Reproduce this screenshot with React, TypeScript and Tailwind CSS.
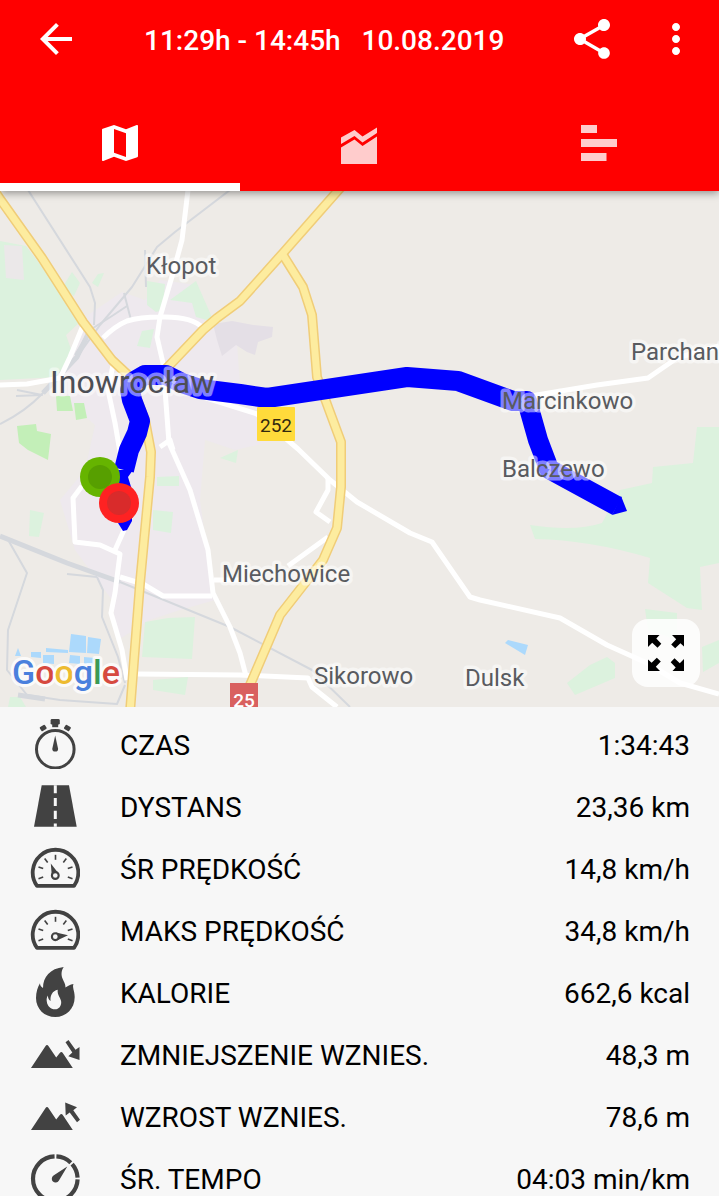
import type { ReactNode } from 'react';
import { MdArrowBack, MdMap, MdMoreVert, MdShare } from 'react-icons/md';

const ICON_COLOR = '#424242';
const TICK_ANGLES = [-109, -71, -37, 0, 37, 71, 109];

const StatIcon = ({ children }: { children: ReactNode }) => (
  <svg viewBox="0 0 50 50" className="size-[50px] shrink-0" fill={ICON_COLOR} aria-hidden="true">
    {children}
  </svg>
);

const StopwatchIcon = () => (
  <StatIcon>
    <circle cx="25.3" cy="30.2" r="18.8" fill="none" stroke={ICON_COLOR} strokeWidth="3" />
    <rect x="20.6" y="0" width="9.2" height="5.6" rx="1.4" />
    <path d="M22.2 5h6v3.2h-6z" />
    <rect x="-3" y="-2.4" width="6" height="4.8" rx="1" transform="translate(13.2 9) rotate(-32)" />
    <rect x="-3" y="-2.4" width="6" height="4.8" rx="1" transform="translate(37.4 9) rotate(32)" />
    <path d="M25.2 16.5l2.9 13.2a2.9 2.9 0 1 1-5.8 0z" />
  </StatIcon>
);

const RoadIcon = () => (
  <StatIcon>
    <path d="M11.7 4.3H39L46.7 45.7H4z" />
    <path
      fill="#f7f7f7"
      d="M23.8 4.3h3v8h-3zM23.8 17h3v8h-3zM23.8 29.7h3v8.3h-3zM23.8 42.4h3v3.3h-3z"
    />
  </StatIcon>
);

const GaugeIcon = ({ needle, hubY }: { needle: string; hubY: number }) => (
  <StatIcon>
    <path
      d="M7 42.9A22.8 22.8 0 1 1 44 42.9Z"
      fill="none"
      stroke={ICON_COLOR}
      strokeWidth="3.8"
      strokeLinejoin="round"
    />
    {TICK_ANGLES.map((angle) => (
      <path
        key={angle}
        d="M25.5 11.8v5"
        stroke={ICON_COLOR}
        strokeWidth="1.6"
        transform={`rotate(${angle} 25.5 29.8)`}
      />
    ))}
    <path d={needle} />
    <circle cx="25.3" cy={hubY} r="3.4" fill="#f7f7f7" stroke={ICON_COLOR} strokeWidth="2.1" />
  </StatIcon>
);

const FlameIcon = () => (
  <StatIcon>
    <path
      fillRule="evenodd"
      d="M33.7 0C31 4 31.200 8 32.500 11.500C34 15 35.500 17 35.500 20.500C37.500 19.500 40 17 43.500 17C42 20 44.700 24 44.700 30C44.700 42 36 50 25.300 50C14.500 50 6 42 6 31C6 25 7.800 20 10 16.300C10 18.500 11 20 13 21C13 10 20 1.500 33.700 0ZM27.700 22.800C22.500 24 20 28.500 20.600 34C18.700 33 18 31 17.800 28.500C16.500 31 16.500 32.500 16.800 34.500C17.300 39 20.500 42.300 25 42.300C29 42.300 31.300 39 31.200 35C31 31 27 28.500 27.700 22.800Z"
    />
  </StatIcon>
);

const MountainIcon = ({ children }: { children: ReactNode }) => (
  <StatIcon>
    <path d="M1 39L15.400 17.200Q17 15 18.600 17.200L26.200 28.500L29.800 24Q31.300 22.200 32.800 24L42.800 39Z" />
    {children}
  </StatIcon>
);

const PaceIcon = () => (
  <StatIcon>
    <circle
      cx="25.3"
      cy="25.7"
      r="22.3"
      fill="none"
      stroke={ICON_COLOR}
      strokeWidth="4.2"
      pathLength="360"
      strokeDasharray="266 5 41 5 38 5"
      strokeDashoffset="-2"
    />
    <path d="M37.300 13.500L28.800 27.800A3.800 3.800 0 1 1 23.500 22.600Z" />
  </StatIcon>
);

const stats = [
  { label: 'CZAS', value: '1:34:43', icon: <StopwatchIcon /> },
  { label: 'DYSTANS', value: '23,36 km', icon: <RoadIcon /> },
  {
    label: 'ŚR PRĘDKOŚĆ',
    value: '14,8 km/h',
    icon: <GaugeIcon hubY={32.5} needle="M20.800 20.500L29 31L21.800 32.500Z" />,
  },
  {
    label: 'MAKS PRĘDKOŚĆ',
    value: '34,8 km/h',
    icon: <GaugeIcon hubY={31.7} needle="M38 30.300L26 27.500L27 35.500Z" />,
  },
  { label: 'KALORIE', value: '662,6 kcal', icon: <FlameIcon /> },
  {
    label: 'ZMNIEJSZENIE WZNIES.',
    value: '48,3 m',
    icon: (
      <MountainIcon>
        <path d="M35.500 13.300L38.500 11L45.500 20.800L49.500 18V31L38.300 27.300L42.300 23.500Z" />
      </MountainIcon>
    ),
  },
  {
    label: 'WZROST WZNIES.',
    value: '78,6 m',
    icon: (
      <MountainIcon>
        <path d="M35.200 11.500L47 16.300L43.300 19.300L50 28.700L47 31.300L39.700 21.500L35.700 24.500Z" />
      </MountainIcon>
    ),
  },
  { label: 'ŚR. TEMPO', value: '04:03 min/km', icon: <PaceIcon /> },
];

const yellowRoads = [
  'M-4 193L0 199L42 258L83 322L112 360L127 374L145 420L151 452L150 477L140 583L130 712',
  'M342 186L283 253L240 301L217 318L203 330L165 370',
  'M283 255L303 287L312 315L317 377L328 407L341 442L341 487L337 528L323 560L280 615L253 678L240 708',
];

const whiteRoads = [
  'M188 190L182 240L173 273L160 317L157 337L163 363L166 403L169 443L190 490L208 550L213 593L230 627L240 653L246 676',
  'M103 338Q115 326 127 321Q140 317 160 317Q192 316 203 328',
  'M0 385L27 384L60 378L70 357L84 323',
  'M113 365L108 390L115 423L120 452',
  'M82 486L73 498L75 542L100 545L120 554L115 593L111 613L122 650L127 680',
  'M124 530L115 550',
  'M120 577L143 584L163 596L212 596',
  'M214 580L240 580M288 566L328 537',
  'M137 674L240 675L308 678L312 687L337 707',
  'M200 396L257 414L298 449L330 480L357 502L410 533L432 542L470 597L480 600L560 618L607 645L647 663L680 683L719 694',
  'M328 478L328 490L316 512L330 522',
  'M525 397L597 385L648 378L677 358L719 346',
  'M160 447L170 440L173 450',
];

const rails = [
  'M28 190L90 287L95 303L94 325',
  'M230 190L175 232L157 247L132 287L100 325L77 357L43 393Q25 412 0 424',
  'M75 355L90 330L112 316L127 306M124 293L131 320M145 250L146 287',
  'M7 538L27 573L8 630L7 670L27 695L60 700L117 704L125 685',
  'M97 577L103 590L102 617L118 657L125 683',
  'M67 574L97 577M17 390L42 395L16 396',
  'M120 582L230 627L312 670L350 707',
];

const places = [
  { name: 'Kłopot', x: 146, y: 274 },
  { name: 'Parchanie', x: 631, y: 360 },
  { name: 'Marcinkowo', x: 502, y: 409 },
  { name: 'Balczewo', x: 502, y: 477 },
  { name: 'Miechowice', x: 222, y: 582 },
  { name: 'Sikorowo', x: 314, y: 684 },
  { name: 'Dulsk', x: 465, y: 686 },
];

const RouteMap = () => (
  <svg
    viewBox="0 191 719 516"
    preserveAspectRatio="xMidYMid slice"
    className="block size-full"
    fontFamily="Roboto, sans-serif"
    role="img"
    aria-label="Mapa trasy"
  >
    <rect x="0" y="191" width="719" height="516" fill="#eeebe7" />

    {/* built-up areas */}
    <path
      fill="#eee9ee"
      d="M88 315L122 292L145 300L160 280L196 285L205 325L236 330L240 385L262 410L280 440L235 450L205 440L200 500L208 560L215 600L180 610L150 620L118 640L112 600L75 550L60 500L85 470L95 425L60 395L66 360Z"
    />
    <path
      fill="#e4dfe6"
      d="M213 324L232 321L253 325L273 327L272 337L258 342L255 355L247 352L236 345L222 356L217 340Z"
    />

    {/* forests and parks */}
    <g fill="#dcf2de">
      <path d="M0 241L26 246L52 280L80 322L66 335L72 352L60 377L0 380Z" />
      <path d="M62 288L72 272L80 283L74 296ZM92 283L98 274L104 273L98 287ZM147 281L165 284L163 310L156 312L147 305Z" />
      <path d="M170 300L196 281L214 322L196 317L192 303ZM137 346L142 331L154 329L150 348Z" />
      <path d="M697 427H719V563L700 567L702 610L687 608L648 583L650 558Q590 540 535 539L530 525Q575 532 602 523L620 490L652 483L653 467L693 463Z" />
      <path d="M645 609L677 613V640L648 630ZM567 683L590 665L607 657L615 663V678L575 695ZM702 647L719 640V663L703 672Z" />
      <path d="M145 622L168 618L195 617L192 659L142 657ZM153 510L173 512L171 533L153 530ZM157 477L179 476V486L157 486Z" />
      <path d="M30 510L44 513L39 537L29 536ZM153 680L188 677L185 695L153 690ZM10 697L20 697L26 707H8ZM220 458L238 450L236 463Z" />
    </g>
    <path fill="#ebe8e9" d="M4 245L22 246L24 280L6 278Z" />
    <g fill="#c3efb8">
      <path d="M56 396L70 396L73 411L57 411ZM74 403L84 403L87 418L76 420Z" />
      <path d="M17 426L36 424L37 431L51 434L48 460L28 450L19 443Z" />
    </g>

    {/* water */}
    <g fill="#acd9fc">
      <path d="M71 634L86 636V653L69 652ZM88 637L101 639L99 654L87 653Z" />
      <path d="M46 648L68 650V653L46 652ZM31 652L41 652V658L31 657ZM43 655L54 655V664L43 663ZM70 655L80 656V664L69 663ZM84 657L95 658L94 665L84 664ZM18 648L21 656L15 656Z" />
      <path d="M508 640L528 645L525 655L505 643Z" />
    </g>

    <g fill="none" strokeLinejoin="round">
      <g stroke="#d5d8dd" strokeWidth="2">
        {rails.map((d) => (
          <path key={d} d={d} />
        ))}
        <path d="M0 536L67 563L120 582" strokeWidth="5" />
        <path d="M90 330L77 357L43 393" strokeWidth="5" />
        <path d="M18 695L45 699" strokeWidth="5" />
      </g>
      <g stroke="#ffffff" strokeWidth="5">
        {whiteRoads.map((d) => (
          <path key={d} d={d} />
        ))}
      </g>
      <g stroke="#f0cd78" strokeWidth="10">
        {yellowRoads.map((d) => (
          <path key={d} d={d} />
        ))}
      </g>
      <g stroke="#fdec9f" strokeWidth="7">
        {yellowRoads.map((d) => (
          <path key={d} d={d} />
        ))}
      </g>

      {/* recorded track */}
      <path
        stroke="#0000ff"
        strokeWidth="20"
        d="M124 470L129 450L137 433L140 421L132 400L130 390L133 382L145 375L166 375L182 383L200 389L240 394L267 398L407 377L458 381L513 401L527 401L538 440L549 469L617 506"
      />
    </g>
    <path fill="#0000ff" d="M111 470L133 470L128 477L132 490V521L127 530L123 531L118 523Z" />
    <path fill="#0000ff" d="M621 496L627 511L612 515Z" />

    <rect x="257" y="407" width="38" height="34" rx="1" fill="#ffdb3b" />
    <text x="276" y="432" fontSize="19" textAnchor="middle" fill="#33290f">
      252
    </text>
    <rect x="230" y="683" width="28" height="28" fill="#d9605f" />
    <text x="244" y="707" fontSize="19" fontWeight="500" textAnchor="middle" fill="#ffffff">
      25
    </text>

    <g stroke="#ffffff" strokeOpacity="0.5" strokeWidth="7" strokeLinejoin="round" paintOrder="stroke">
      <g fontSize="24" fill="#595b60">
        {places.map(({ name, x, y }) => (
          <text key={name} x={x} y={y}>
            {name}
          </text>
        ))}
      </g>
      <text x="50" y="393" fontSize="32" fill="#4c4e54">
        Inowrocław
      </text>
    </g>

    <circle cx="100" cy="477" r="20" fill="#66b400" />
    <circle cx="100" cy="477" r="12" fill="#579f00" />
    <circle cx="119" cy="503" r="20" fill="#fe2222" />
    <circle cx="119" cy="503" r="12" fill="#d92b2b" />

    <text
      x="12"
      y="684"
      fontSize="34"
      fontWeight="500"
      stroke="#ffffff"
      strokeOpacity="0.8"
      strokeWidth="6"
      strokeLinejoin="round"
      paintOrder="stroke"
    >
      <tspan fill="#4a80dd">G</tspan>
      <tspan fill="#d6493f">o</tspan>
      <tspan fill="#edbb30">o</tspan>
      <tspan fill="#4a80dd">g</tspan>
      <tspan fill="#3c9a55">l</tspan>
      <tspan fill="#d6493f">e</tspan>
    </text>
  </svg>
);

const ChartIcon = () => (
  <svg viewBox="0 0 48 48" className="size-12" fill="currentColor" aria-hidden="true">
    <path d="M6 45V28.500L19.500 20.500L27.500 27L42 17.500V45Z" />
    <path d="M6 18.500L19.500 11L27.500 17.500L42 8.500V14L27.500 23.500L19.500 17L6 25Z" />
  </svg>
);

const BarsIcon = () => (
  <svg viewBox="0 0 48 48" className="size-12" fill="currentColor" aria-hidden="true">
    <path d="M6 6h16v8H6zM6 20h36v8H6zM6 34h25.500v8H6z" />
  </svg>
);

const tabs = [
  { name: 'Mapa', icon: <MdMap className="size-12" />, active: true },
  { name: 'Wykres', icon: <ChartIcon />, active: false },
  { name: 'Okrążenia', icon: <BarsIcon />, active: false },
];

const App = () => {
  return (
    <div className="flex h-screen flex-col overflow-hidden bg-[#f7f7f7] font-[Roboto,sans-serif]">
      <header className="relative z-10 shrink-0 bg-[#ff0000] text-white shadow-[0_2px_8px_rgba(0,0,0,0.4)]">
        <div className="flex h-[78px] items-center pr-[19px] pl-8">
          <button type="button" aria-label="Wstecz">
            <MdArrowBack className="size-12" />
          </button>
          <h1 className="ml-16 flex-1 pt-1 text-[28px] leading-9 font-medium whitespace-pre">
            11:29h - 14:45h   10.08.2019
          </h1>
          <button type="button" aria-label="Udostępnij" className="mr-9">
            <MdShare className="size-12" />
          </button>
          <button type="button" aria-label="Więcej">
            <MdMoreVert className="size-12" />
          </button>
        </div>
        <nav className="mt-[17px] grid h-24 grid-cols-3" role="tablist">
          {tabs.map(({ name, icon, active }) => (
            <button
              key={name}
              type="button"
              role="tab"
              aria-label={name}
              aria-selected={active}
              className={
                active
                  ? 'flex items-center justify-center shadow-[inset_0_-8px_0_#ffffff]'
                  : 'flex items-center justify-center text-[#ffcccc]'
              }
            >
              {icon}
            </button>
          ))}
        </nav>
      </header>

      <section className="relative aspect-[719/516] w-full shrink-0 overflow-hidden">
        <RouteMap />
        <button
          type="button"
          aria-label="Pełny ekran"
          className="absolute right-[19px] bottom-5 flex size-[68px] items-center justify-center rounded-2xl bg-white/85"
        >
          <svg viewBox="0 0 36 36" className="size-9" fill="#000000" aria-hidden="true">
            {[0, 90, 180, 270].map((angle) => (
              <path
                key={angle}
                d="M0 0H11.500L8.300 3.600L13.300 8.800L9.500 12.800L4.200 7.800L0 12Z"
                transform={`rotate(${angle} 18 18)`}
              />
            ))}
          </svg>
        </button>
      </section>

      <dl className="min-h-0 flex-1 overflow-y-auto pt-[6px] [scrollbar-width:none]">
        {stats.map(({ label, value, icon }) => (
          <div
            key={label}
            className="flex h-[62px] items-center gap-10 pr-[29px] pl-[30px] text-[28px] leading-9 text-black"
          >
            {icon}
            <dt className="flex-1 pt-1">{label}</dt>
            <dd className="pt-1">{value}</dd>
          </div>
        ))}
      </dl>
    </div>
  );
};

export default App;
